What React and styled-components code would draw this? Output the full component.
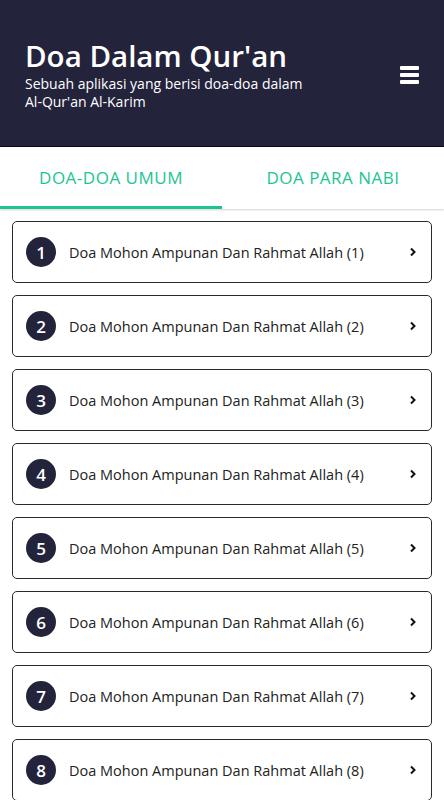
import React from "react";
import styled, { createGlobalStyle } from "styled-components";

const GlobalStyle = createGlobalStyle`
  body {
    margin: 0;
    background: #ffffff;
    font-family: "Open Sans", Lato, sans-serif;
  }
`;

const Page = styled.div`
  width: 444px;
  height: 800px;
  overflow: hidden;
  background: #ffffff;
`;

const Header = styled.header`
  height: 147px;
  background: #23233c;
  border-bottom: 1px solid #0a0a12;
  box-sizing: border-box;
  display: flex;
  align-items: center;
  justify-content: space-between;
  padding: 4px 25px 0 25px;
`;

const TitleBlock = styled.div`
  display: flex;
  flex-direction: column;
  color: #ffffff;
`;

const Title = styled.h1`
  margin: 0;
  font-size: 29.5px;
  font-weight: 600;
  line-height: 34px;
`;

const Subtitle = styled.p`
  margin: 2px 0 0;
  font-size: 14px;
  line-height: 18px;
  width: 285px;
`;

const MenuButton = styled.button`
  background: none;
  border: 0;
  padding: 0;
  display: flex;
  flex-direction: column;
  gap: 3px;
  width: 19px;
`;

const Bar = styled.span`
  display: block;
  height: 4px;
  border-radius: 1px;
  background: #ffffff;
`;

const Tabs = styled.nav`
  display: grid;
  grid-template-columns: 1fr 1fr;
  height: 62px;
  box-shadow: 0 1px 2px rgba(0, 0, 0, 0.18);
`;

const Tab = styled.div`
  display: flex;
  align-items: center;
  justify-content: center;
  color: #1ec493;
  font-size: 17px;
  letter-spacing: 0.5px;
  text-transform: uppercase;
  border-bottom: 3px solid ${(p) => (p.$active ? "#1ec493" : "transparent")};
  box-sizing: border-box;
  padding-top: 2px;
`;

const List = styled.ul`
  list-style: none;
  margin: 0;
  padding: 12px 12px 0;
  display: flex;
  flex-direction: column;
  gap: 12px;
`;

const Card = styled.li`
  height: 62px;
  box-sizing: border-box;
  border: 1px solid #2a2a2a;
  border-radius: 5px;
  display: flex;
  align-items: center;
  padding: 0 14px 0 13px;
`;

const Number = styled.span`
  width: 30px;
  height: 30px;
  border-radius: 50%;
  background: #23233c;
  color: #ffffff;
  font-size: 17px;
  font-weight: 600;
  display: flex;
  align-items: center;
  justify-content: center;
  flex-shrink: 0;
`;

const ItemText = styled.span`
  flex: 1;
  margin-left: 13px;
  font-size: 14.5px;
  color: #222222;
`;

const Chevron = () => (
  <svg width="8" height="10" viewBox="0 0 8 10">
    <path d="M2 1.5 L5.5 5 L2 8.5" fill="none" stroke="#111" strokeWidth="2" />
  </svg>
);

const items = [1, 2, 3, 4, 5, 6, 7, 8];

export default function App() {
  return (
    <Page>
      <GlobalStyle />
      <Header>
        <TitleBlock>
          <Title>Doa Dalam Qur'an</Title>
          <Subtitle>Sebuah aplikasi yang berisi doa-doa dalam Al-Qur'an Al-Karim</Subtitle>
        </TitleBlock>
        <MenuButton aria-label="menu">
          <Bar />
          <Bar />
          <Bar />
        </MenuButton>
      </Header>
      <Tabs>
        <Tab $active>Doa-doa umum</Tab>
        <Tab>Doa para nabi</Tab>
      </Tabs>
      <List>
        {items.map((n) => (
          <Card key={n}>
            <Number>{n}</Number>
            <ItemText>Doa Mohon Ampunan Dan Rahmat Allah ({n})</ItemText>
            <Chevron />
          </Card>
        ))}
      </List>
    </Page>
  );
}
